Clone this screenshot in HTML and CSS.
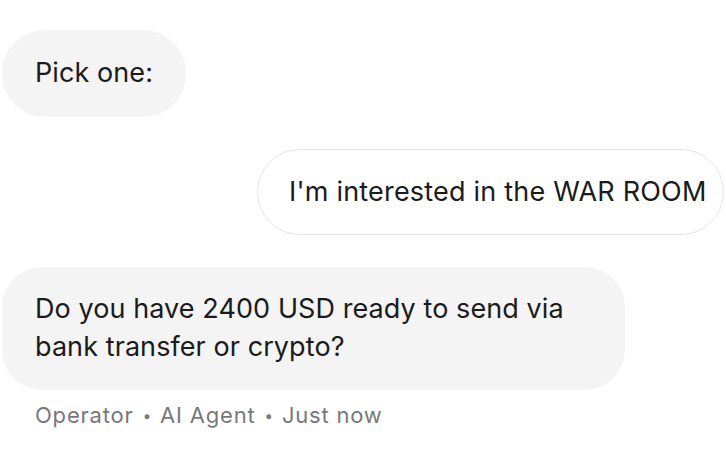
FILE: index.html
```html
<!DOCTYPE html>
<html lang="en">
<head>
<meta charset="utf-8">
<title>Chat</title>
<link rel="stylesheet" href="styles.css">
</head>
<body>
  <div class="thread">
    <div class="msg msg-in">
      <div class="bubble bubble-in">Pick one:</div>
    </div>
    <div class="msg msg-out">
      <div class="bubble bubble-out">I'm interested in the WAR ROOM</div>
    </div>
    <div class="msg msg-in">
      <div class="bubble bubble-in bubble-wide">Do you have 2400 USD ready to send via bank transfer or crypto?</div>
      <div class="meta">Operator<span class="dot">•</span>AI Agent<span class="dot">•</span>Just now</div>
    </div>
  </div>
</body>
</html>
```

FILE: styles.css
```css
html, body {
  margin: 0;
  padding: 0;
  background: #ffffff;
}

body {
  font-family: Inter, Roboto, "Liberation Sans", sans-serif;
  color: #1b1b1b;
  width: 726px;
  height: 456px;
  overflow: hidden;
}

.thread {
  display: flex;
  flex-direction: column;
  gap: 32px;
  padding: 30px 2px 0 2px;
}

.msg {
  display: flex;
  flex-direction: column;
}

.msg-in {
  align-items: flex-start;
}

.msg-out {
  align-items: flex-end;
}

.bubble {
  font-size: 27px;
  line-height: 38px;
  padding: 24px 33px 25px 33px;
  border-radius: 43px;
  box-sizing: border-box;
  letter-spacing: 0.08px;
}

.bubble-in {
  background: #f4f4f4;
}

.bubble-out {
  background: #ffffff;
  border: 1.5px solid #e4e4e4;
  padding: 23px 10px 23px 31px;
  width: 467px;
  white-space: nowrap;
  letter-spacing: 0.2px;
}

.bubble-wide {
  width: 623px;
  border-radius: 40px;
  padding-top: 23px;
  padding-bottom: 24px;
}

.meta {
  margin-top: 11px;
  padding-left: 33px;
  font-size: 22px;
  line-height: 28px;
  letter-spacing: 0.8px;
  color: #787878;
}

.dot {
  display: inline-block;
  font-size: 15px;
  vertical-align: 2px;
  margin: 0 9px 0 9px;
  letter-spacing: 0;
}
```
